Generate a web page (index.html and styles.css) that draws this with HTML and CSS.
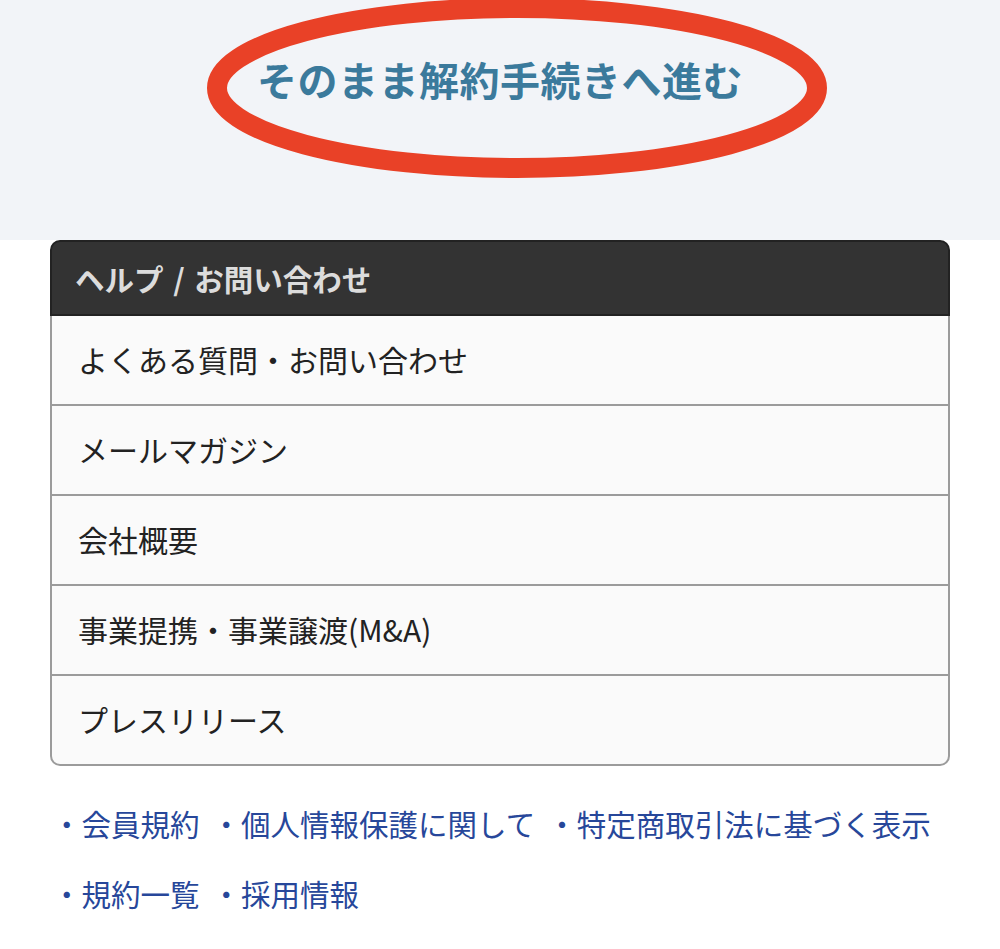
FILE: index.html
```html
<!DOCTYPE html>
<html lang="ja">
<head>
<meta charset="utf-8">
<title>解約手続き</title>
<link rel="stylesheet" href="styles.css">
</head>
<body>
<section class="top">
  <a class="proceed" href="#">そのまま解約手続きへ進む</a>
  <svg class="circle" width="640" height="200" viewBox="0 0 640 200" aria-hidden="true">
    <ellipse cx="320" cy="100" rx="300" ry="80" fill="none" stroke="#e94127" stroke-width="20"/>
  </svg>
</section>
<section class="card">
  <div class="card-head">ヘルプ / お問い合わせ</div>
  <ul class="card-list">
    <li class="card-row">よくある質問・お問い合わせ</li>
    <li class="card-row">メールマガジン</li>
    <li class="card-row">会社概要</li>
    <li class="card-row">事業提携・事業譲渡(M&amp;A)</li>
    <li class="card-row">プレスリリース</li>
  </ul>
</section>
<nav class="links">
  <a href="#">・会員規約</a>
  <a href="#">・個人情報保護に関して</a>
  <a href="#">・特定商取引法に基づく表示</a>
  <a href="#">・規約一覧</a>
  <a href="#">・採用情報</a>
</nav>
</body>
</html>
```
FILE: styles.css
```css
* { box-sizing: border-box; }
html, body { margin: 0; padding: 0; background: #ffffff; }
body {
  font-family: "Noto Sans CJK JP", "Noto Sans", sans-serif;
  color: #222222;
  width: 1000px;
  overflow: hidden;
}
.top {
  position: relative;
  height: 240px;
  background: #f2f4f8;
  display: flex;
  justify-content: center;
  align-items: flex-start;
  padding-top: 51px;
}
.proceed {
  font-size: 40px;
  font-weight: 700;
  color: #3b7a9c;
  text-decoration: none;
  line-height: 56px;
  letter-spacing: 0.5px;
}
.circle {
  position: absolute;
  left: 197px;
  top: -12px;
  pointer-events: none;
}
.card {
  margin: 0 50px 0 50px;
}
.card-head {
  background: #333333;
  border: 2px solid #222222;
  border-radius: 10px 10px 0 0;
  height: 76px;
  padding-left: 23px;
  display: flex;
  align-items: center;
  color: #dcdcdc;
  font-size: 29.5px;
  font-weight: 700;
  word-spacing: 3px;
}
.card-list {
  list-style: none;
  margin: 0;
  padding: 0;
  border: 2px solid #9b9b9b;
  border-top: none;
  border-radius: 0 0 10px 10px;
  overflow: hidden;
  background: #fafafa;
}
.card-row {
  height: 90px;
  display: flex;
  align-items: center;
  padding-left: 26px;
  padding-bottom: 2px;
  font-size: 30px;
  color: #222222;
  border-bottom: 2px solid #9b9b9b;
}
.card-row:last-child { border-bottom: none; height: 88px; }
.links {
  margin-top: 22px;
  padding-left: 52px;
  display: flex;
  flex-wrap: wrap;
  column-gap: 12px;
  line-height: 70px;
  font-size: 29.5px;
}
.links a {
  color: #27479a;
  text-decoration: none;
  white-space: nowrap;
}
```
